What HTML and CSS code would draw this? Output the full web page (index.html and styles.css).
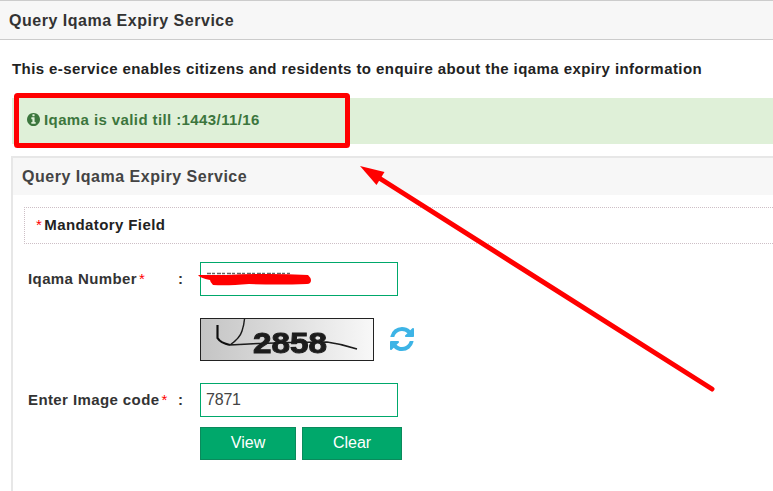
FILE: index.html
```html
<!DOCTYPE html>
<html lang="en">
<head>
<meta charset="utf-8">
<title>Query Iqama Expiry Service</title>
<link rel="stylesheet" href="styles.css">
</head>
<body>
<header class="page-head">Query Iqama Expiry Service</header>
<p class="intro">This e-service enables citizens and residents to enquire about the iqama expiry information</p>
<div class="alert">
  <svg class="info" viewBox="128 128 1536 1536" aria-hidden="true"><path fill="#3c763d" d="M1152 1376v-160q0-14-9-23t-23-9h-96v-512q0-14-9-23t-23-9h-320q-14 0-23 9t-9 23v160q0 14 9 23t23 9h96v320h-96q-14 0-23 9t-9 23v160q0 14 9 23t23 9h448q14 0 23-9t9-23zm-128-896v-160q0-14-9-23t-23-9h-192q-14 0-23 9t-9 23v160q0 14 9 23t23 9h192q14 0 23-9t9-23zm640 416q0 209-103 385.500t-279.500 279.500-385.500 103-385.500-103-279.500-279.500-103-385.500 103-385.500 279.500-279.500 385.500-103 385.500 103 279.500 279.500 103 385.500z"/></svg>
  <span>Iqama is valid till :1443/11/16</span>
</div>
<section class="panel">
  <h2 class="panel-head">Query Iqama Expiry Service</h2>
  <div class="panel-body">
    <div class="mandatory"><span class="star">*</span>Mandatory Field</div>
    <form class="form">
      <div class="row row-number">
        <label class="label">Iqama Number<span class="star">*</span></label>
        <span class="colon">:</span>
        <div class="field"></div>
      </div>
      <div class="row row-captcha">
        <div class="captcha">
          <svg viewBox="0 0 172 41" width="172" height="41" aria-hidden="true">
            <defs>
              <linearGradient id="cg" x1="0" x2="1" y1="0" y2="0"><stop offset="0" stop-color="#c4c4c4"/><stop offset="1" stop-color="#f8f8f8"/></linearGradient>
              <filter id="soft" x="-5%" y="-5%" width="110%" height="110%"><feGaussianBlur stdDeviation="0.5"/></filter>
            </defs>
            <rect width="172" height="41" fill="url(#cg)"/>
            <g filter="url(#soft)">
              <text x="52" y="34" class="captcha-text" textLength="74" lengthAdjust="spacingAndGlyphs">2858</text>
              <path d="M16.500 6v13q3 5 12.500 7" fill="none" stroke="#111" stroke-width="2.200"/>
              <path d="M29 26q10-7 12-14 2-6 2.500-12M29 26q50-3 97-3 15 2 30 7" fill="none" stroke="#1a1a1a" stroke-width="1.400"/>
            </g>
          </svg>
        </div>
        <svg class="refresh" viewBox="128 128 1536 1536" aria-hidden="true"><path fill="#3db4e6" d="M1639 1056q0 5-1 7-64 268-268 434.500t-478 166.500q-146 0-282.500-55t-243.500-157l-129 129q-19 19-45 19t-45-19-19-45v-448q0-26 19-45t45-19h448q26 0 45 19t19 45-19 45l-137 137q71 66 161 102t187 36q134 0 250-65t186-179q11-17 53-117 8-23 30-23h192q13 0 22.500 9.500t9.500 22.500zm25-800v448q0 26-19 45t-45 19h-448q-26 0-45-19t-19-45 19-45l138-138q-148-137-349-137-134 0-250 65t-186 179q-11 17-53 117-8 23-30 23h-199q-13 0-22.500-9.500t-9.500-22.500v-7q65-268 270-434.500t480-166.500q146 0 284 55.500t245 156.500l130-129q19-19 45-19t45 19 19 45z"/></svg>
      </div>
      <div class="row row-code">
        <label class="label">Enter Image code<span class="star">*</span></label>
        <span class="colon">:</span>
        <div class="field">7871</div>
      </div>
      <div class="actions">
        <button type="button" class="btn btn-view">View</button>
        <button type="button" class="btn btn-clear">Clear</button>
      </div>
    </form>
  </div>
</section>
<svg class="annotations" width="773" height="491" viewBox="0 0 773 491" aria-hidden="true">
  <rect x="16.500" y="95.500" width="331" height="50" rx="1" fill="none" stroke="#f00" stroke-width="5"/>
  <path d="M712 389L376 176" stroke="#f00" stroke-width="5" stroke-linecap="round" fill="none"/>
  <path d="M360 166L384.500 172 376.500 185z" fill="#f00"/>
  <path d="M207 273.500H290" stroke="#666" stroke-width="1.500" stroke-dasharray="4 1 3 2" fill="none"/>
  <path d="M198 275q12 0 30 0 40-2 80 0 3 3 3 5 0 4-4 4-30 1-58 0-22 2-36 1-3-3-3-5-10-2-12-5z" fill="#f00"/>
</svg>
</body>
</html>
```
FILE: styles.css
```css
* { box-sizing: border-box; }
html, body { margin: 0; padding: 0; }
body {
  width: 773px;
  height: 491px;
  overflow: hidden;
  position: relative;
  background: #fff;
  font-family: "Liberation Sans", Arial, sans-serif;
  color: #333;
}
.page-head {
  height: 40px;
  background: #f7f7f7;
  border-top: 1px solid #ccc;
  border-bottom: 1px solid #ccc;
  padding: 0 0 0 9px;
  font-size: 16px;
  line-height: 39px;
  font-weight: bold;
  letter-spacing: .52px;
  color: #333;
}
.intro {
  margin: 0;
  padding: 20px 0 0 12px;
  height: 58px;
  font-size: 15px;
  line-height: 18px;
  font-weight: bold;
  letter-spacing: .42px;
  white-space: nowrap;
  color: #222;
}
.alert {
  margin-left: 12px;
  height: 46px;
  background: #dff0d8;
  color: #3c763d;
  display: flex;
  align-items: center;
  gap: 4px;
  padding: 0 0 4px 15px;
  font-size: 15px;
  font-weight: bold;
  letter-spacing: .4px;
}
.info { width: 13px; height: 13px; flex: none; }
.panel {
  margin: 12px 0 0 11px;
  height: 335px;
  border: 2px solid #e7e7e7;
  border-width: 2px 0 0 2px;
}
.panel-head {
  margin: 0;
  height: 37px;
  background: #f7f7f7;
  padding-left: 9px;
  font-size: 16px;
  line-height: 38px;
  font-weight: bold;
  letter-spacing: .52px;
  color: #444;
}
.panel-body { padding: 12px 0 0 11px; }
.mandatory {
  height: 37px;
  border: 1px dotted #cdbfc6;
  border-right: 0;
  padding-left: 11px;
  font-size: 15px;
  font-weight: bold;
  line-height: 34px;
  letter-spacing: .4px;
  color: #222;
}
.star { color: #f00; font-weight: normal; margin: 0 2px 0 0; }
.form { padding-left: 4px; }
.row { display: flex; align-items: center; }
.row-number { margin-top: 18px; }
.row-captcha { margin-top: 22px; height: 43px; padding-left: 172px; }
.row-code { margin-top: 22px; }
.label {
  width: 150px;
  font-size: 15px;
  font-weight: bold;
  letter-spacing: .4px;
  color: #333;
  padding-bottom: 2px;
  white-space: nowrap;
}
.label .star { margin: 0 0 0 2px; }
.colon {
  width: 22px;
  font-size: 15px;
  font-weight: bold;
  padding-bottom: 1px;
  color: #333;
}
.field {
  width: 198px;
  height: 34px;
  border: 1px solid #00a86b;
  padding-left: 5px;
  font-size: 16px;
  line-height: 32px;
  letter-spacing: -.2px;
  color: #444;
}
.captcha {
  width: 174px;
  height: 43px;
  border: 1px solid #222;
}
.captcha svg { display: block; }
.captcha-text {
  font-family: "Liberation Sans", Arial, sans-serif;
  font-size: 30px;
  font-weight: bold;
  fill: #1c1c1c;
  stroke: #1c1c1c;
  stroke-width: 1px;
}
.refresh { width: 24px; height: 24px; margin-left: 16px; margin-top: -2px; flex: none; }
.actions { display: flex; gap: 6px; margin-top: 10px; padding-left: 172px; }
.btn {
  height: 33px;
  background: #00a86b;
  border: 1px solid #0b8a5c;
  color: #fff;
  font-family: "Liberation Sans", Arial, sans-serif;
  font-size: 16px;
  padding: 0 0 2px;
}
.btn-view { width: 96px; }
.btn-clear { width: 100px; }
.annotations { position: absolute; left: 0; top: 0; pointer-events: none; }
```
